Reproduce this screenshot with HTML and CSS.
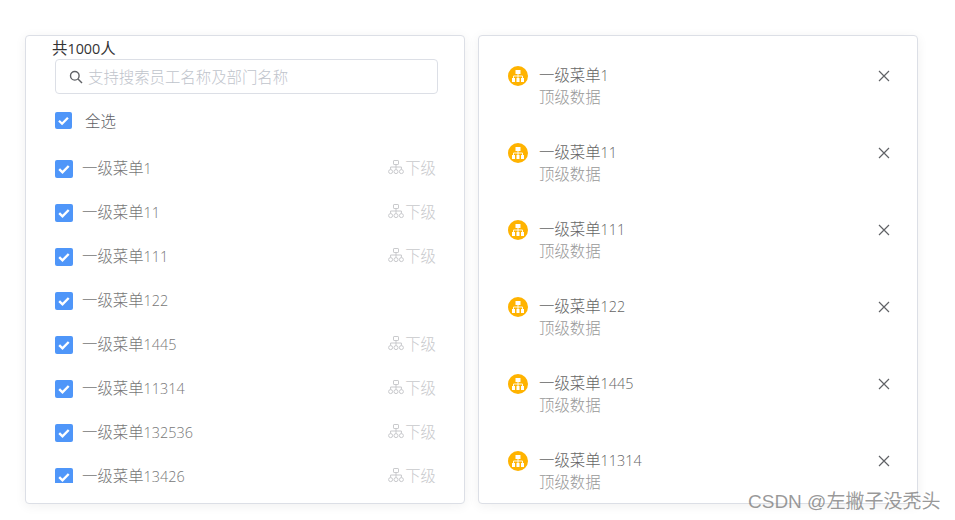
FILE: index.html
```html
<!DOCTYPE html>
<html lang="zh">
<head>
<meta charset="utf-8">
<title>选择人员</title>
<link rel="stylesheet" href="styles.css">
</head>
<body>
<svg class="defs" width="0" height="0" aria-hidden="true">
  <symbol id="org" viewBox="0 0 16 16">
    <g fill="none" stroke="currentColor" stroke-width="1">
      <rect x="5.5" y="1.5" width="5" height="4" rx=".6"/>
      <path d="M8 5.5V8M2.6 10.5V8h10.8v2.5M8 8v2.5"/>
      <circle cx="2.6" cy="12.6" r="2"/>
      <circle cx="8" cy="12.6" r="2"/>
      <circle cx="13.4" cy="12.6" r="2"/>
    </g>
  </symbol>
  <symbol id="tick" viewBox="0 0 18 18">
    <path d="M4.2 9.2l3.3 3.2 6.2-6.4" fill="none" stroke="#fff" stroke-width="2.4"/>
  </symbol>
  <symbol id="org-fill" viewBox="0 0 20 20">
    <g fill="#fff">
      <rect x="7.5" y="4" width="5" height="4"/>
      <rect x="4" y="12" width="3" height="4"/>
      <rect x="8.5" y="12" width="3" height="4"/>
      <rect x="13" y="12" width="3" height="4"/>
    </g>
    <path d="M10 8v4M5.5 12v-2h9v2" fill="none" stroke="#fff" stroke-width=".9"/>
  </symbol>
  <symbol id="close" viewBox="0 0 12 12">
    <path d="M1 1l10 10M11 1L1 11" fill="none" stroke="currentColor" stroke-width="1.2"/>
  </symbol>
</svg>
<main class="page">
  <section class="panel left">
    <div class="total">共<span class="num">1000</span>人</div>
    <div class="search">
      <svg class="search-icon" viewBox="0 0 14 14" aria-hidden="true"><circle cx="5.8" cy="5.8" r="4.3" fill="none" stroke="currentColor" stroke-width="1.4"/><path d="M9 9l4 4" stroke="currentColor" stroke-width="1.5" fill="none"/></svg>
      <span class="placeholder">支持搜索员工名称及部门名称</span>
    </div>
    <label class="all"><span class="check"><svg><use href="#tick"/></svg></span><span class="all-text">全选</span></label>
    <ul class="list">
      <li class="row"><span class="check big"><svg><use href="#tick"/></svg></span><span class="name">一级菜单<span class="num">1</span></span><span class="sub"><svg><use href="#org"/></svg>下级</span></li>
      <li class="row"><span class="check big"><svg><use href="#tick"/></svg></span><span class="name">一级菜单<span class="num">11</span></span><span class="sub"><svg><use href="#org"/></svg>下级</span></li>
      <li class="row"><span class="check big"><svg><use href="#tick"/></svg></span><span class="name">一级菜单<span class="num">111</span></span><span class="sub"><svg><use href="#org"/></svg>下级</span></li>
      <li class="row"><span class="check big"><svg><use href="#tick"/></svg></span><span class="name">一级菜单<span class="num">122</span></span></li>
      <li class="row"><span class="check big"><svg><use href="#tick"/></svg></span><span class="name">一级菜单<span class="num">1445</span></span><span class="sub"><svg><use href="#org"/></svg>下级</span></li>
      <li class="row"><span class="check big"><svg><use href="#tick"/></svg></span><span class="name">一级菜单<span class="num">11314</span></span><span class="sub"><svg><use href="#org"/></svg>下级</span></li>
      <li class="row"><span class="check big"><svg><use href="#tick"/></svg></span><span class="name">一级菜单<span class="num">132536</span></span><span class="sub"><svg><use href="#org"/></svg>下级</span></li>
      <li class="row"><span class="check big"><svg><use href="#tick"/></svg></span><span class="name">一级菜单<span class="num">13426</span></span><span class="sub"><svg><use href="#org"/></svg>下级</span></li>
    </ul>
  </section>
  <section class="panel right">
    <ul class="picked">
      <li class="item"><svg class="badge"><use href="#org-fill"/></svg><div class="info"><div class="title">一级菜单<span class="num">1</span></div><div class="desc">顶级数据</div></div><svg class="close"><use href="#close"/></svg></li>
      <li class="item"><svg class="badge"><use href="#org-fill"/></svg><div class="info"><div class="title">一级菜单<span class="num">11</span></div><div class="desc">顶级数据</div></div><svg class="close"><use href="#close"/></svg></li>
      <li class="item"><svg class="badge"><use href="#org-fill"/></svg><div class="info"><div class="title">一级菜单<span class="num">111</span></div><div class="desc">顶级数据</div></div><svg class="close"><use href="#close"/></svg></li>
      <li class="item"><svg class="badge"><use href="#org-fill"/></svg><div class="info"><div class="title">一级菜单<span class="num">122</span></div><div class="desc">顶级数据</div></div><svg class="close"><use href="#close"/></svg></li>
      <li class="item"><svg class="badge"><use href="#org-fill"/></svg><div class="info"><div class="title">一级菜单<span class="num">1445</span></div><div class="desc">顶级数据</div></div><svg class="close"><use href="#close"/></svg></li>
      <li class="item"><svg class="badge"><use href="#org-fill"/></svg><div class="info"><div class="title">一级菜单<span class="num">11314</span></div><div class="desc">顶级数据</div></div><svg class="close"><use href="#close"/></svg></li>
    </ul>
  </section>
</main>
<div class="watermark">CSDN @左撇子没秃头</div>
</body>
</html>
```

FILE: styles.css
```css
* { box-sizing: border-box; }
html, body { margin: 0; height: 100%; }
body {
  background: #fff;
  font-family: "Open Sans", "Noto Sans CJK SC", sans-serif;
  font-size: 15.4px;
  font-weight: 300;
  color: #606266;
  overflow: hidden;
  position: relative;
}
.defs { position: absolute; }
ul { list-style: none; margin: 0; padding: 0; }
.num { font-size: 14.4px; }
.page {
  display: flex;
  gap: 13px;
  padding: 35px 0 0 25px;
}
.panel {
  width: 440px;
  height: 469px;
  border: 1px solid #dcdfe6;
  border-radius: 4px;
  box-shadow: 0 2px 12px rgba(0, 0, 0, .06);
  overflow: hidden;
  background: #fff;
}
.left { padding: 0 26px 0 29px; }
.total {
  height: 23px;
  line-height: 26px;
  margin-left: -3px;
  color: #333;
  font-weight: 400;
}
.search {
  display: flex;
  align-items: center;
  gap: 5px;
  height: 35px;
  padding-left: 13px;
  border: 1px solid #dcdfe6;
  border-radius: 4px;
}
.search-icon { width: 14px; height: 14px; color: #606266; }
.placeholder { color: #c0c4cc; }
.all {
  display: flex;
  align-items: center;
  height: 18px;
  margin-top: 17px;
}
.check {
  flex: none;
  display: block;
  width: 17px;
  height: 17px;
  background: #4f96f9;
  border-radius: 2px;
}
.check svg { display: block; width: 100%; height: 100%; }
.check.big { width: 18px; height: 18px; margin-top: 3px; }
.all-text { margin-left: 13px; color: #606266; }
.list {
  height: 338px;
  margin-top: 16px;
  overflow: hidden;
}
.row {
  display: flex;
  align-items: center;
  height: 44px;
}
.name { margin-left: 9px; color: #777; }
.sub {
  display: flex;
  align-items: center;
  margin-left: auto;
  margin-right: 2px;
  color: #c8c9cc;
}
.sub svg { width: 16px; height: 16px; margin-right: 1px; }
.picked { padding: 18px 27px 0 29px; }
.item {
  display: flex;
  height: 77px;
}
.badge { flex: none; width: 20px; height: 20px; margin-top: 12px; background: #ffb300; border-radius: 50%; }
.info { margin-left: 11px; flex: 1; line-height: 22px; padding-top: 11px; }
.title { color: #666; }
.desc { color: #999; }
.close { flex: none; width: 12px; height: 12px; margin-top: 16px; color: #606266; }
.watermark {
  position: absolute;
  left: 748px;
  top: 490px;
  font-size: 19px;
  line-height: 24px;
  font-weight: 400;
  color: rgba(120, 120, 120, .75);
  font-family: "Liberation Sans", "Noto Sans CJK SC", sans-serif;
  white-space: nowrap;
}
```
